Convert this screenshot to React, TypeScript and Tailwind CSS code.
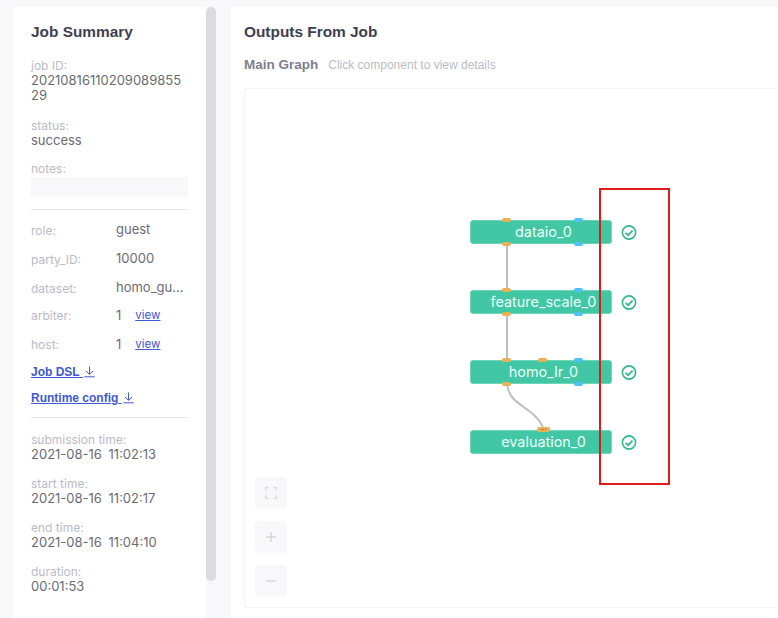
const sans = 'font-["Inter",sans-serif]'
const arial = 'font-["Liberation_Sans",sans-serif]'

function Stacked({ label, value, className, time }: { label: string; value: string; className?: string; time?: boolean }) {
  return (
    <div className={className}>
      <div className="text-[12px] leading-[15px] text-[#bbbbc8]">{label}</div>
      <div className={`text-[13px] leading-[15px] break-all text-[#6a6c75] ${time ? '[word-spacing:3px]' : ''}`}>{value}</div>
    </div>
  )
}

function Row({ label, value, view, className }: { label: string; value: string; view?: boolean; className?: string }) {
  return (
    <div className={`flex h-[29px] items-center ${className ?? ''}`}>
      <span className={`w-[85px] shrink-0 text-[12px] text-[#bbbbc8] ${view ? '' : 'pt-[3px]'}`}>{label}</span>
      <span className="truncate text-[13px] text-[#6a6c75]">{value}</span>
      {view && <a className="ml-[14px] text-[11.5px] text-[#4159d1] underline">view</a>}
    </div>
  )
}

function DownloadLink({ label, className }: { label: string; className?: string }) {
  return (
    <a className={`flex items-center text-[12px] leading-[16px] font-bold text-[#4159d1] ${arial} ${className ?? ''}`}>
      <span className="whitespace-pre underline">{label} </span>
      <svg className="ml-[1px] h-[12px] w-[11px]" viewBox="0 0 11 12" fill="none" stroke="#4159d1" strokeWidth="1">
        <path d="M5.5 0.5v7.5M2 5l3.5 3.3L9 5M0.3 10.8h10.4" />
      </svg>
    </a>
  )
}

function Port({ x, y, blue }: { x: number; y: number; blue?: boolean }) {
  return (
    <span
      className={`absolute h-[4px] w-[9px] rounded-[2px] ${blue ? 'bg-[#4fc0fa]' : 'bg-[#e6b258]'}`}
      style={{ left: x, top: y }}
    />
  )
}

function Node({ name, top }: { name: string; top: number }) {
  return (
    <div
      className="absolute left-[225px] flex h-[24px] w-[142px] items-center justify-center rounded-[3px] border border-[#6fd6bb] bg-[#41c7a4] pb-[1px] pl-[5px] text-[14.4px] text-[#eafff9]"
      style={{ top }}
    >
      {name}
    </div>
  )
}

function Check({ top }: { top: number }) {
  return (
    <svg className="absolute left-[375px] h-[17px] w-[18px]" style={{ top }} viewBox="0 0 18 17" fill="none" stroke="#31b78c">
      <circle cx="9" cy="8.5" r="6.6" strokeWidth="1.6" />
      <path d="M5.6 8.8l2.5 2.4 4.4-4.6" strokeWidth="1.7" />
    </svg>
  )
}

function ToolBtn({ children }: { children: React.ReactNode }) {
  return <div className="flex h-[32px] w-[32px] items-center justify-center rounded-[4px] bg-[#f8f8fa]">{children}</div>
}

export default function App() {
  return (
    <div className={`flex h-[618px] w-[778px] overflow-hidden bg-[#f8f8fa] pt-[7px] pl-[13px] ${sans}`}>
      <div className="flex shrink-0">
        <div className="h-[640px] w-[193px] rounded-tl-[4px] bg-white pt-[16px] pr-[18px] pl-[18px]">
          <h2 className={`text-[15.4px] leading-[18px] font-bold text-[#3e3f50] ${arial}`}>Job Summary</h2>
          <Stacked className="mt-[17px]" label="job ID:" value="2021081611020908985529" />
          <Stacked className="mt-[15px]" label="status:" value="success" />
          <div className="mt-[13px] text-[12px] leading-[15px] text-[#bbbbc8]">notes:</div>
          <div className="mt-[1px] h-[20px] bg-[#f8f8fa]" />
          <div className="mt-[12px] h-px bg-[#e8e8ec]" />
          <div className="mt-[5px]">
            <Row label="role:" value="guest" />
            <Row label="party_ID:" value="10000" />
            <Row label="dataset:" value="homo_guest" />
            <Row className="-mt-px" label="arbiter:" value="1" view />
            <Row label="host:" value="1" view />
          </div>
          <DownloadLink className="mt-[5px]" label="Job DSL" />
          <DownloadLink className="mt-[10px]" label="Runtime config" />
          <div className="mt-[11px] h-px bg-[#e8e8ec]" />
          <Stacked className="mt-[14px]" label="submission time:" value="2021-08-16 11:02:13" time />
          <Stacked className="mt-[14px]" label="start time:" value="2021-08-16 11:02:17" time />
          <Stacked className="mt-[14px]" label="end time:" value="2021-08-16 11:04:10" time />
          <Stacked className="mt-[14px]" label="duration:" value="00:01:53" />
        </div>
        <div className="h-[574px] w-[10px] rounded-[5px] bg-[#dcdce0]" />
      </div>

      <div className="ml-[15px] h-[640px] min-w-0 flex-1 bg-white pt-[16px] pl-[13px]">
        <h2 className={`text-[15.4px] leading-[18px] font-bold text-[#3e3f50] ${arial}`}>Outputs From Job</h2>
        <div className={`mt-[15px] flex items-baseline gap-[10px] ${arial}`}>
          <span className="text-[13.5px] leading-[18px] font-bold text-[#7f7d8e]">Main Graph</span>
          <span className="text-[12px] text-[#bbbbc8]">Click component to view details</span>
        </div>
        <div className="relative mt-[14px] h-[520px] w-[540px] border border-[#f4f4f6]">
          {/* graph canvas, coordinates relative to the box */}
          <svg className="absolute top-0 left-0 h-[400px] w-[500px]" fill="none" stroke="#bdbccb" strokeWidth="2">
            <path d="M262 155v46M262 225v46" />
            <path d="M262 295c2 22 26 22 36 43" />
          </svg>
          <Node name="dataio_0" top={131} />
          <Node name="feature_scale_0" top={201} />
          <Node name="homo_lr_0" top={271} />
          <Node name="evaluation_0" top={341} />

          <Port x={257} y={129} />
          <Port x={329} y={129} blue />
          <Port x={257} y={153} />
          <Port x={329} y={153} blue />
          <Port x={257} y={199} />
          <Port x={329} y={199} blue />
          <Port x={257} y={223} />
          <Port x={329} y={223} blue />
          <Port x={257} y={269} />
          <Port x={293} y={269} />
          <Port x={329} y={269} blue />
          <Port x={257} y={293} />
          <Port x={329} y={293} blue />
          <span className="absolute top-[338px] left-[292px] flex h-[5px] w-[13px] items-center justify-center gap-[1px] rounded-[2px] bg-[#e6b258]">
            <i className="h-[1px] w-[1px] bg-[#8a6a30]" />
            <i className="h-[1px] w-[1px] bg-[#8a6a30]" />
            <i className="h-[1px] w-[1px] bg-[#8a6a30]" />
          </span>

          <Check top={135} />
          <Check top={205} />
          <Check top={275} />
          <Check top={345} />

          <div className="absolute top-[99px] left-[354px] h-[297px] w-[71px] border-2 border-[#e01b1b]" />

          <div className="absolute top-[388px] left-[10px] flex flex-col gap-[12px]">
            <ToolBtn>
              <svg className="h-[12px] w-[12px]" viewBox="0 0 12 12" fill="none" stroke="#d6d6de" strokeWidth="1.3">
                <path d="M.7 3.5V.7h2.8M8.5.7h2.8v2.8M11.3 8.5v2.8H8.5M3.5 11.3H.7V8.5" />
              </svg>
            </ToolBtn>
            <ToolBtn>
              <svg className="h-[10px] w-[10px]" viewBox="0 0 10 10" fill="none" stroke="#c8c8d2">
                <path d="M5 0v10M0 5h10" />
              </svg>
            </ToolBtn>
            <ToolBtn>
              <svg className="h-[10px] w-[10px]" viewBox="0 0 10 10" fill="none" stroke="#c8c8d2">
                <path d="M0 5h10" />
              </svg>
            </ToolBtn>
          </div>
        </div>
      </div>
    </div>
  )
}
